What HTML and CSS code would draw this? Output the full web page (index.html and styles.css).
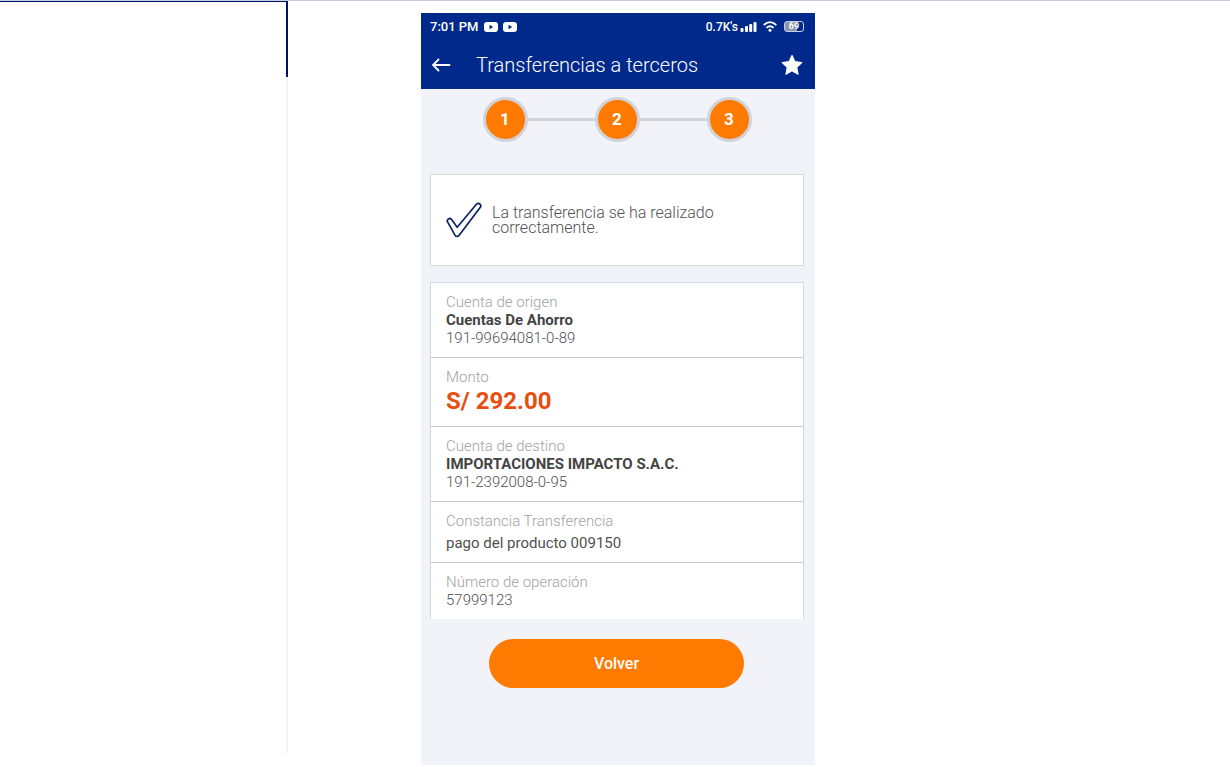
FILE: index.html
```
<!DOCTYPE html>
<html lang="es">
  <head>
    <meta charset="UTF-8" />
    <meta name="viewport" content="width=device-width, initial-scale=1.0" />
    <title>Transferencias a terceros</title>
    <link rel="stylesheet" href="styles.css">
  </head>
  <body>
    <div class="page">
      <aside class="side"></aside>
      <main class="content">
        <div class="phone">
          <header class="top">
            <div class="status-bar">
              <span>7:01 PM</span>
              <svg class="video-icon" viewBox="0 0 14 10" width="14" height="10">
                <rect width="14" height="10" rx="3" fill="#fff" />
                <path d="M5.5 2.8 L9.2 5 L5.5 7.2 Z" fill="#00298c" />
              </svg>
              <svg class="video-icon" viewBox="0 0 14 10" width="14" height="10">
                <rect width="14" height="10" rx="3" fill="#fff" />
                <path d="M5.5 2.8 L9.2 5 L5.5 7.2 Z" fill="#00298c" />
              </svg>
              <div class="status-right">
                <span>0.7K's</span>
                <svg viewBox="0 0 17 11" width="17" height="11" fill="#fff">
                  <rect x="0.5" y="7" width="3" height="4" rx="1" />
                  <rect x="5" y="5" width="3" height="6" rx="1" />
                  <rect x="9.2" y="3" width="3" height="8" rx="1" />
                  <rect x="13.5" y="1" width="3" height="10" rx="1" />
                </svg>
                <svg class="wifi" viewBox="0 0 14 11" width="14" height="11" fill="none" stroke="#fff" stroke-width="1.8">
                  <path d="M0.7 4 Q7 -1.8 13.3 4" />
                  <path d="M3.4 6.9 Q7 3.6 10.6 6.9" />
                  <circle cx="7" cy="9.2" r="1.5" fill="#fff" stroke="none" />
                </svg>
                <div class="battery">69</div>
              </div>
            </div>
            <div class="title-bar">
              <button class="icon-btn" aria-label="Atrás">
                <svg viewBox="0 0 20 14" width="20" height="14" fill="none" stroke="#fff" stroke-width="1.8" stroke-linecap="round">
                  <path d="M18.5 7 H2 M7.5 1.5 L2 7 L7.5 12.5" />
                </svg>
              </button>
              <h1>Transferencias a terceros</h1>
              <button class="icon-btn" aria-label="Favorito">
                <svg viewBox="0 0 22 22" width="22" height="22">
                  <path d="M11 1.5 L13.9 7.7 L20.7 8.5 L15.7 13.2 L17 20.2 L11 16.8 L5 20.2 L6.3 13.2 L1.3 8.5 L8.1 7.7 Z" fill="#fff" stroke="#fff" stroke-width="1.2" stroke-linejoin="round" />
                </svg>
              </button>
            </div>
          </header>

          <div class="steps">
            <div class="step">1</div>
            <div class="step-line"></div>
            <div class="step">2</div>
            <div class="step-line"></div>
            <div class="step">3</div>
          </div>

          <section class="card message">
            <svg viewBox="0 0 36 36" width="36" height="36" fill="none" stroke="#0b2265" stroke-width="1.7" stroke-linejoin="round">
              <path d="M1.7 20.2 C0.2 18.2 3.5 15.2 5.4 17.3 L11.2 25.2 L30.4 2.3 C32.4 0 36.2 2.8 34.3 5.3 L13.2 33.2 C12 34.8 10.2 34.8 9 33.2 Z" />
            </svg>
            <p>La transferencia se ha realizado correctamente.</p>
          </section>

          <section class="card details">
            <div class="row">
              <p class="label">Cuenta de origen</p>
              <p class="name">Cuentas De Ahorro</p>
              <p class="value">191-99694081-0-89</p>
            </div>
            <div class="row">
              <p class="label">Monto</p>
              <p class="amount">S/ 292.00</p>
            </div>
            <div class="row">
              <p class="label">Cuenta de destino</p>
              <p class="name">IMPORTACIONES IMPACTO S.A.C.</p>
              <p class="value">191-2392008-0-95</p>
            </div>
            <div class="row">
              <p class="label">Constancia Transferencia</p>
              <p class="note">pago del producto 009150</p>
            </div>
            <div class="row">
              <p class="label">Número de operación</p>
              <p class="value">57999123</p>
            </div>
          </section>

          <button class="back-btn">Volver</button>
        </div>
      </main>
    </div>
  </body>
</html>
```

FILE: styles.css
```
* {
  box-sizing: border-box;
}
body {
  margin: 0;
  background-color: #fff;
  color: #505050;
  font-family: Roboto, "Liberation Sans", sans-serif;
}
h1,
p {
  margin: 0;
}
button {
  border: none;
  font-family: inherit;
  cursor: pointer;
}
.page {
  display: flex;
  min-height: 100vh;
  border-top: 1px solid #c3cfde;
}
.side {
  width: 288px;
  margin-bottom: 14px;
  border-top: 1px solid #00106c;
  border-right: 2px solid;
  border-image: linear-gradient(#00106c 77px, #f1f1f8 77px) 2;
}
.content {
  flex: 1;
  padding: 12px 12px 2px 133px;
}
.phone {
  max-width: 394px;
  min-height: 752px;
  background-color: #f2f3f8;
}

/* header */
.top {
  background-color: #00298c;
  color: #fff;
}
.status-bar {
  display: flex;
  align-items: center;
  gap: 5px;
  height: 27px;
  padding: 0 11px 0 9px;
  font-size: 13px;
  font-weight: 500;
}
.status-right {
  display: flex;
  align-items: center;
  gap: 2px;
  margin-left: auto;
  font-size: 12px;
}
.wifi {
  margin: 0 5px 0 4px;
}
.battery {
  width: 20px;
  height: 11px;
  border: 1px solid #c5cfe8;
  border-radius: 3px;
  background: linear-gradient(90deg, #8c96a8 65%, transparent 65%);
  font-size: 9px;
  font-weight: bold;
  line-height: 9px;
  text-align: center;
}
.title-bar {
  display: flex;
  align-items: center;
  height: 49px;
  padding: 0 12px 0 10px;
}
.title-bar h1 {
  flex: 1;
  margin-left: 25px;
  font-size: 20px;
  font-weight: 300;
}
.icon-btn {
  display: flex;
  padding: 0;
  background: none;
}

/* steps */
.steps {
  display: flex;
  justify-content: center;
  align-items: center;
  padding: 8px 2px 32px 0;
}
.step {
  width: 45px;
  height: 45px;
  border: 3px solid #d0d3dc;
  border-radius: 50%;
  background-color: #ff7a00;
  color: #fff;
  font-size: 17px;
  font-weight: bold;
  line-height: 39px;
  text-align: center;
}
.step-line {
  width: 67px;
  height: 3px;
  background-color: #d0d3dc;
}

/* cards */
.card {
  margin: 0 11px 0 9px;
  border: 1px solid #d6d8de;
  background-color: #fff;
}
.message {
  display: flex;
  align-items: center;
  gap: 10px;
  min-height: 92px;
  padding: 0 60px 0 15px;
  font-size: 16px;
  font-weight: 300;
  line-height: 15px;
}
.message svg {
  flex: none;
}
.details {
  margin-top: 16px;
  border-bottom: none;
  font-size: 15px;
  line-height: 18px;
}
.row {
  padding: 10px 15px;
  border-bottom: 1px solid #c8c8ca;
}
.row:last-child {
  border-bottom: none;
}
.label {
  color: #a2a2a2;
  font-weight: 300;
}
.name {
  color: #444;
  font-weight: bold;
}
.value {
  font-weight: 300;
}
.amount {
  color: #e84e0f;
  font-size: 24px;
  font-weight: bold;
  line-height: 30px;
}
.note {
  margin-top: 4px;
}
.back-btn {
  display: block;
  width: calc(100% - 139px);
  height: 49px;
  margin: 20px 71px 0 68px;
  border-radius: 25px;
  background-color: #ff7a00;
  color: #fff;
  font-size: 16px;
  font-weight: 500;
}
```
